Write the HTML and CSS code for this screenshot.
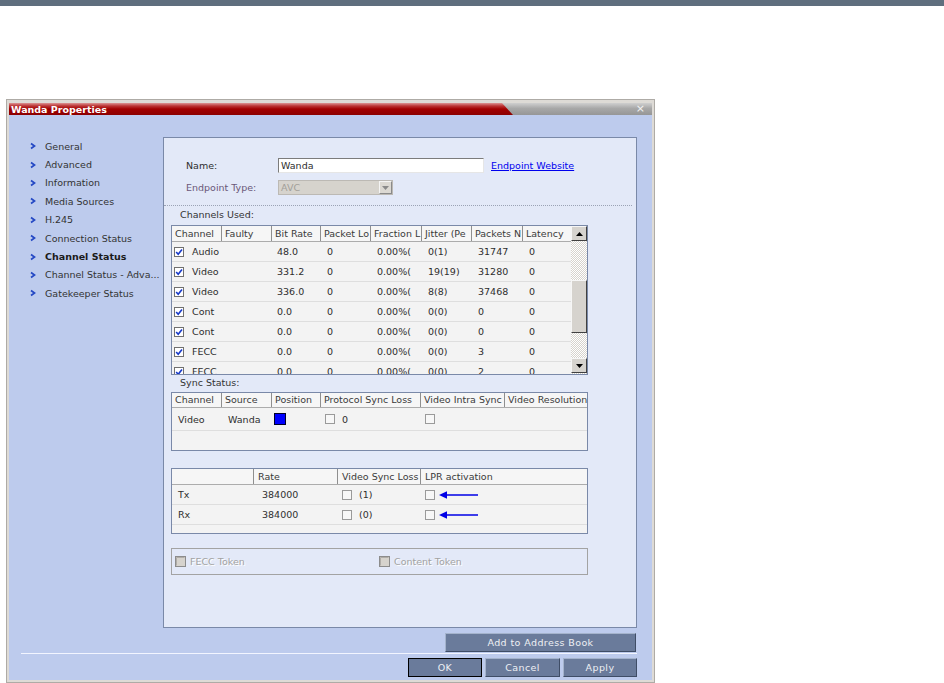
FILE: index.html
```html
<!DOCTYPE html>
<html>
<head>
<meta charset="utf-8">
<link rel="stylesheet" href="styles.css">
</head>
<body>
<div class="topbar"></div>
<div class="dialog">
  <div class="titlebar">
    <div class="title-red"><span class="title-text">Wanda Properties</span></div>
    <span class="close">×</span>
  </div>
  <div class="body">
    <div class="main">
      <ul class="nav">
        <li><svg class="chev" viewBox="0 0 8 8"><polyline points="2,1.5 5.5,4 2,6.5" fill="none" stroke="#2448c4" stroke-width="1.7"/></svg>General</li>
        <li><svg class="chev" viewBox="0 0 8 8"><polyline points="2,1.5 5.5,4 2,6.5" fill="none" stroke="#2448c4" stroke-width="1.7"/></svg>Advanced</li>
        <li><svg class="chev" viewBox="0 0 8 8"><polyline points="2,1.5 5.5,4 2,6.5" fill="none" stroke="#2448c4" stroke-width="1.7"/></svg>Information</li>
        <li><svg class="chev" viewBox="0 0 8 8"><polyline points="2,1.5 5.5,4 2,6.5" fill="none" stroke="#2448c4" stroke-width="1.7"/></svg>Media Sources</li>
        <li><svg class="chev" viewBox="0 0 8 8"><polyline points="2,1.5 5.5,4 2,6.5" fill="none" stroke="#2448c4" stroke-width="1.7"/></svg>H.245</li>
        <li><svg class="chev" viewBox="0 0 8 8"><polyline points="2,1.5 5.5,4 2,6.5" fill="none" stroke="#2448c4" stroke-width="1.7"/></svg>Connection Status</li>
        <li class="active"><svg class="chev" viewBox="0 0 8 8"><polyline points="2,1.5 5.5,4 2,6.5" fill="none" stroke="#2448c4" stroke-width="1.7"/></svg>Channel Status</li>
        <li><svg class="chev" viewBox="0 0 8 8"><polyline points="2,1.5 5.5,4 2,6.5" fill="none" stroke="#2448c4" stroke-width="1.7"/></svg>Channel Status - Adva...</li>
        <li><svg class="chev" viewBox="0 0 8 8"><polyline points="2,1.5 5.5,4 2,6.5" fill="none" stroke="#2448c4" stroke-width="1.7"/></svg>Gatekeeper Status</li>
      </ul>
      <div class="panel">
        <div class="form-row name-row">
          <label>Name:</label>
          <div class="input">Wanda</div>
          <a class="link">Endpoint Website</a>
        </div>
        <div class="form-row type-row">
          <label class="muted">Endpoint Type:</label>
          <div class="select"><span>AVC</span><span class="sel-btn"><svg width="7" height="4" viewBox="0 0 7 4"><polygon points="0,0 7,0 3.5,4" fill="#8a8a8a"/></svg></span></div>
        </div>
        <div class="dotted"></div>
        <div class="section-label">Channels Used:</div>
        <div class="tbl channels">
          <div class="ch-main">
            <div class="thead ch-cols">
              <div>Channel</div><div>Faulty</div><div>Bit Rate</div><div>Packet Lo</div><div>Fraction L</div><div>Jitter (Pe</div><div>Packets N</div><div>Latency</div>
            </div>
            <div class="ch-body">
              <div class="trow ch-cols"><div class="chk-cell"><svg class="cb" viewBox="0 0 10 10"><rect x=".5" y=".5" width="9" height="9" fill="#fff" stroke="#707070"/><path d="M2.2 5 L4.2 7.3 L8 2.6" fill="none" stroke="#1638c8" stroke-width="1.6"/></svg>Audio</div><div></div><div class="br">48.0</div><div>0</div><div>0.00%(</div><div>0(1)</div><div>31747</div><div>0</div></div>
              <div class="trow ch-cols"><div class="chk-cell"><svg class="cb" viewBox="0 0 10 10"><rect x=".5" y=".5" width="9" height="9" fill="#fff" stroke="#707070"/><path d="M2.2 5 L4.2 7.3 L8 2.6" fill="none" stroke="#1638c8" stroke-width="1.6"/></svg>Video</div><div></div><div class="br">331.2</div><div>0</div><div>0.00%(</div><div>19(19)</div><div>31280</div><div>0</div></div>
              <div class="trow ch-cols"><div class="chk-cell"><svg class="cb" viewBox="0 0 10 10"><rect x=".5" y=".5" width="9" height="9" fill="#fff" stroke="#707070"/><path d="M2.2 5 L4.2 7.3 L8 2.6" fill="none" stroke="#1638c8" stroke-width="1.6"/></svg>Video</div><div></div><div class="br">336.0</div><div>0</div><div>0.00%(</div><div>8(8)</div><div>37468</div><div>0</div></div>
              <div class="trow ch-cols"><div class="chk-cell"><svg class="cb" viewBox="0 0 10 10"><rect x=".5" y=".5" width="9" height="9" fill="#fff" stroke="#707070"/><path d="M2.2 5 L4.2 7.3 L8 2.6" fill="none" stroke="#1638c8" stroke-width="1.6"/></svg>Cont</div><div></div><div class="br">0.0</div><div>0</div><div>0.00%(</div><div>0(0)</div><div>0</div><div>0</div></div>
              <div class="trow ch-cols"><div class="chk-cell"><svg class="cb" viewBox="0 0 10 10"><rect x=".5" y=".5" width="9" height="9" fill="#fff" stroke="#707070"/><path d="M2.2 5 L4.2 7.3 L8 2.6" fill="none" stroke="#1638c8" stroke-width="1.6"/></svg>Cont</div><div></div><div class="br">0.0</div><div>0</div><div>0.00%(</div><div>0(0)</div><div>0</div><div>0</div></div>
              <div class="trow ch-cols"><div class="chk-cell"><svg class="cb" viewBox="0 0 10 10"><rect x=".5" y=".5" width="9" height="9" fill="#fff" stroke="#707070"/><path d="M2.2 5 L4.2 7.3 L8 2.6" fill="none" stroke="#1638c8" stroke-width="1.6"/></svg>FECC</div><div></div><div class="br">0.0</div><div>0</div><div>0.00%(</div><div>0(0)</div><div>3</div><div>0</div></div>
              <div class="trow ch-cols"><div class="chk-cell"><svg class="cb" viewBox="0 0 10 10"><rect x=".5" y=".5" width="9" height="9" fill="#fff" stroke="#707070"/><path d="M2.2 5 L4.2 7.3 L8 2.6" fill="none" stroke="#1638c8" stroke-width="1.6"/></svg>FECC</div><div></div><div class="br">0.0</div><div>0</div><div>0.00%(</div><div>0(0)</div><div>2</div><div>0</div></div>
            </div>
          </div>
          <div class="scrollbar">
            <div class="sb-btn"><svg width="7" height="4" viewBox="0 0 7 4"><polygon points="0,4 7,4 3.5,0" fill="#000"/></svg></div>
            <div class="sb-thumb"></div>
            <div class="sb-btn sb-down"><svg width="7" height="4" viewBox="0 0 7 4"><polygon points="0,0 7,0 3.5,4" fill="#000"/></svg></div>
          </div>
        </div>
        <div class="section-label sync-label">Sync Status:</div>
        <div class="tbl sync">
          <div class="thead sync-cols sync-head">
            <div>Channel</div><div>Source</div><div>Position</div><div>Protocol Sync Loss</div><div>Video Intra Sync</div><div>Video Resolution</div>
          </div>
          <div class="trow sync-cols sync-row">
            <div>Video</div><div>Wanda</div><div class="pos-cell"><span class="blue-sq"></span></div>
            <div class="chk-cell2"><svg class="cb" viewBox="0 0 10 10"><rect x=".5" y=".5" width="9" height="9" fill="#f7f7f7" stroke="#9a9a9a"/></svg>0</div>
            <div class="chk-cell2"><svg class="cb" viewBox="0 0 10 10"><rect x=".5" y=".5" width="9" height="9" fill="#f7f7f7" stroke="#9a9a9a"/></svg></div>
            <div></div>
          </div>
          <div class="sync-empty"></div>
        </div>
        <div class="tbl rate">
          <div class="thead rate-cols">
            <div></div><div>Rate</div><div>Video Sync Loss</div><div>LPR activation</div>
          </div>
          <div class="trow rate-cols">
            <div>Tx</div><div class="rate-val">384000</div>
            <div class="chk-cell2"><svg class="cb" viewBox="0 0 10 10"><rect x=".5" y=".5" width="9" height="9" fill="#f7f7f7" stroke="#9a9a9a"/></svg>(1)</div>
            <div class="chk-cell2 lpr"><svg class="cb" viewBox="0 0 10 10"><rect x=".5" y=".5" width="9" height="9" fill="#f7f7f7" stroke="#9a9a9a"/></svg><svg class="arrow" width="40" height="8" viewBox="0 0 40 8"><line x1="7" y1="4" x2="39" y2="4" stroke="#0000e6" stroke-width="1.5"/><polygon points="0,4 8,0.3 8,7.7" fill="#0000e6"/></svg></div>
          </div>
          <div class="trow rate-cols">
            <div>Rx</div><div class="rate-val">384000</div>
            <div class="chk-cell2"><svg class="cb" viewBox="0 0 10 10"><rect x=".5" y=".5" width="9" height="9" fill="#f7f7f7" stroke="#9a9a9a"/></svg>(0)</div>
            <div class="chk-cell2 lpr"><svg class="cb" viewBox="0 0 10 10"><rect x=".5" y=".5" width="9" height="9" fill="#f7f7f7" stroke="#9a9a9a"/></svg><svg class="arrow" width="40" height="8" viewBox="0 0 40 8"><line x1="7" y1="4" x2="39" y2="4" stroke="#0000e6" stroke-width="1.5"/><polygon points="0,4 8,0.3 8,7.7" fill="#0000e6"/></svg></div>
          </div>
          <div class="rate-empty"></div>
        </div>
        <div class="token">
          <div class="token-item fecc"><svg class="cb dis" viewBox="0 0 11 11"><rect x=".5" y=".5" width="10" height="10" fill="#d6d3cd" stroke="#8c8c8c"/><path d="M1.5 9.5 V1.5 H9.5" fill="none" stroke="#b0ada8"/></svg>FECC Token</div>
          <div class="token-item"><svg class="cb dis" viewBox="0 0 11 11"><rect x=".5" y=".5" width="10" height="10" fill="#d6d3cd" stroke="#8c8c8c"/><path d="M1.5 9.5 V1.5 H9.5" fill="none" stroke="#b0ada8"/></svg>Content Token</div>
        </div>
      </div>
    </div>
    <div class="addrow"><button class="btn add">Add to Address Book</button></div>
    <div class="sep"></div>
    <div class="btnrow">
      <button class="btn ok">OK</button>
      <button class="btn cancel">Cancel</button>
      <button class="btn apply">Apply</button>
    </div>
  </div>
</div>
</body>
</html>
```
FILE: styles.css
```css
body {
  margin: 0;
  background: #ffffff;
  font-family: "DejaVu Sans", "Liberation Sans", sans-serif;
  font-size: 9.5px;
  color: #2e2e2e;
}

.topbar {
  height: 6px;
  background: #5f6e7e;
}

.dialog {
  margin: 93px 0 0 6px;
  width: 643px;
  border: 1px solid #aeaba6;
  background: #dedbd6;
  padding: 3px 2px 2px;
}

.titlebar {
  display: flex;
  align-items: center;
  height: 12px;
  background: linear-gradient(#cfcfcf, #a8a8a8 45%, #969696);
}

.title-red {
  width: 504px;
  height: 12px;
  background: linear-gradient(#dc9494 0, #bb3434 3px, #a20000 6px, #8c0000 100%);
  clip-path: polygon(0 0, 493px 0, 504px 100%, 0 100%);
  display: flex;
  align-items: center;
}

.title-text {
  color: #ffffff;
  font-weight: bold;
  font-size: 9.5px;
  padding-left: 2px;
}

.close {
  margin-left: auto;
  margin-right: 7px;
  color: #f2f2f2;
  font-size: 11px;
  line-height: 12px;
}

.body {
  height: 565px;
  box-sizing: border-box;
  background: #bdcbed;
  padding: 22px 15px 3px 0;
  display: flex;
  flex-direction: column;
}

.main {
  display: flex;
  height: 491px;
}

.nav {
  width: 154px;
  margin: 0;
  padding: 0 0 0 20px;
  box-sizing: border-box;
  list-style: none;
  color: #333333;
}

.nav li {
  height: 18.4px;
  display: flex;
  align-items: center;
  white-space: nowrap;
}

.nav li.active {
  font-weight: bold;
  color: #1a1a1a;
}

.chev {
  width: 8px;
  height: 8px;
  margin-right: 8px;
  flex: none;
}

.panel {
  width: 474px;
  height: 491px;
  box-sizing: border-box;
  border: 1px solid #7a89a8;
  background: #e3e9f8;
}

.form-row {
  display: flex;
  align-items: center;
  height: 15px;
  padding-left: 22px;
}

.name-row {
  margin-top: 20px;
}

.type-row {
  margin-top: 7px;
}

.form-row label {
  width: 92px;
  flex: none;
}

.form-row label.muted {
  color: #6a5878;
}

.input {
  width: 206px;
  height: 15px;
  box-sizing: border-box;
  background: #ffffff;
  border: 1px solid;
  border-color: #7c7c7c #e6e6e6 #e6e6e6 #7c7c7c;
  padding-left: 2px;
  line-height: 13px;
}

.link {
  margin-left: 7px;
  color: #0000ee;
  text-decoration: underline;
}

.select {
  width: 115px;
  height: 15px;
  box-sizing: border-box;
  background: #d6d3cd;
  border: 1px solid #bcb9b4;
  display: flex;
  align-items: center;
  color: #a29f99;
  padding-left: 2px;
}

.sel-btn {
  margin-left: auto;
  width: 13px;
  height: 13px;
  box-sizing: border-box;
  border: 1px solid;
  border-color: #f4f4f4 #8a8a8a #8a8a8a #f4f4f4;
  background: #dcd9d3;
  display: flex;
  align-items: center;
  justify-content: center;
}

.dotted {
  margin: 10px 4px 0 0;
  border-top: 1px dotted #9ba3b5;
}

.section-label {
  height: 12px;
  line-height: 12px;
  padding-left: 16px;
  margin-top: 3px;
  color: #333333;
}

.sync-label {
  margin-top: 2px;
}

.tbl {
  margin-left: 7px;
  width: 417px;
  box-sizing: border-box;
  border: 1px solid #7a89a8;
  background: #f3f3f3;
}

.channels {
  margin-top: 4px;
  display: flex;
  height: 150px;
}

.ch-main {
  width: 399px;
}

.thead {
  display: grid;
  height: 15px;
  border-bottom: 1px solid #acacac;
  background: #f6f6f6;
  color: #3a3a3a;
}

.thead > div {
  border-right: 1px solid #8f8f8f;
  padding-left: 3px;
  line-height: 15px;
  overflow: hidden;
  white-space: nowrap;
}

.ch-cols {
  grid-template-columns: 50px 50px 49px 50px 51px 50px 51px 48px;
}

.ch-body {
  height: 132px;
  overflow: hidden;
}

.trow {
  display: grid;
  height: 19px;
  border-bottom: 1px solid #dedede;
  align-items: center;
}

.trow > div {
  padding-left: 6px;
  white-space: nowrap;
  overflow: hidden;
}

.trow > div.br {
  padding-left: 5px;
}

.trow > div.chk-cell {
  display: flex;
  align-items: center;
  padding-left: 2px;
}

.cb {
  width: 10px;
  height: 10px;
  flex: none;
}

.chk-cell .cb {
  margin-right: 8px;
}

.scrollbar {
  width: 16px;
  display: flex;
  flex-direction: column;
  background: repeating-conic-gradient(#ffffff 0 25%, #d6d3cd 0 50%) 0 0 / 2px 2px;
}

.sb-btn,
.sb-thumb {
  box-sizing: border-box;
  background: #d6d3ce;
  border: 1px solid;
  border-color: #f6f6f6 #404040 #404040 #f6f6f6;
}

.sb-btn {
  height: 15px;
  display: flex;
  align-items: center;
  justify-content: center;
}

.sb-thumb {
  margin-top: 39px;
  height: 53px;
}

.sb-down {
  margin-top: auto;
  margin-bottom: 1px;
}

.sync {
  margin-top: 3px;
}

.sync-cols {
  grid-template-columns: 50px 50px 49px 100px 84px 82px;
}

.sync-head {
  height: 14px;
}

.sync-head > div {
  line-height: 14px;
}

.thead > div:last-child {
  border-right: none;
}

.sync-row {
  height: 22px;
}

.trow > div.pos-cell {
  padding-left: 2px;
  display: flex;
  align-items: center;
}

.blue-sq {
  width: 12px;
  height: 12px;
  box-sizing: border-box;
  background: #0000ff;
  border: 1px solid #00002a;
}

.trow > div.chk-cell2 {
  display: flex;
  align-items: center;
  padding-left: 4px;
}

.chk-cell2 .cb {
  margin-right: 7px;
}

.sync-empty {
  height: 19px;
}

.rate {
  margin-top: 17px;
}

.rate-cols {
  grid-template-columns: 82px 84px 83px 166px;
}

.rate .thead > div {
  padding-left: 4px;
}

.trow > div.rate-val {
  padding-left: 8px;
}

.lpr .cb {
  margin-right: 4px;
}

.arrow {
  flex: none;
}

.rate-empty {
  height: 8px;
}

.token {
  margin: 14px 0 0 7px;
  width: 417px;
  height: 27px;
  box-sizing: border-box;
  border: 1px solid #a3a3a3;
  display: flex;
  align-items: center;
  color: #a2a2a2;
  text-shadow: 1px 1px 0 #ffffff;
  padding-left: 3px;
}

.token-item {
  display: flex;
  align-items: center;
}

.token-item.fecc {
  width: 204px;
}

.cb.dis {
  width: 11px;
  height: 11px;
  margin-right: 4px;
}

.addrow {
  margin-top: 5px;
  display: flex;
  justify-content: flex-end;
}

.btn {
  font-family: "DejaVu Sans", "Liberation Sans", sans-serif;
  font-size: 9.5px;
  font-weight: normal;
  color: #eef0f4;
  background: #6a7b9b;
  border: 1px solid;
  border-color: #a4b3cc #3f4d66 #3f4d66 #a4b3cc;
  height: 19px;
  padding: 0;
  margin: 0;
  letter-spacing: 0.4px;
}

.add {
  width: 191px;
  margin-right: 1px;
}

.sep {
  margin: 1px 0 0 12px;
  height: 1px;
  background: #f2f5ff;
}

.btnrow {
  margin-top: 4px;
  display: flex;
  justify-content: flex-end;
  gap: 3px;
}

.ok {
  width: 74px;
  border: 1px solid #000000;
}

.cancel {
  width: 75px;
}

.apply {
  width: 74px;
}
```
